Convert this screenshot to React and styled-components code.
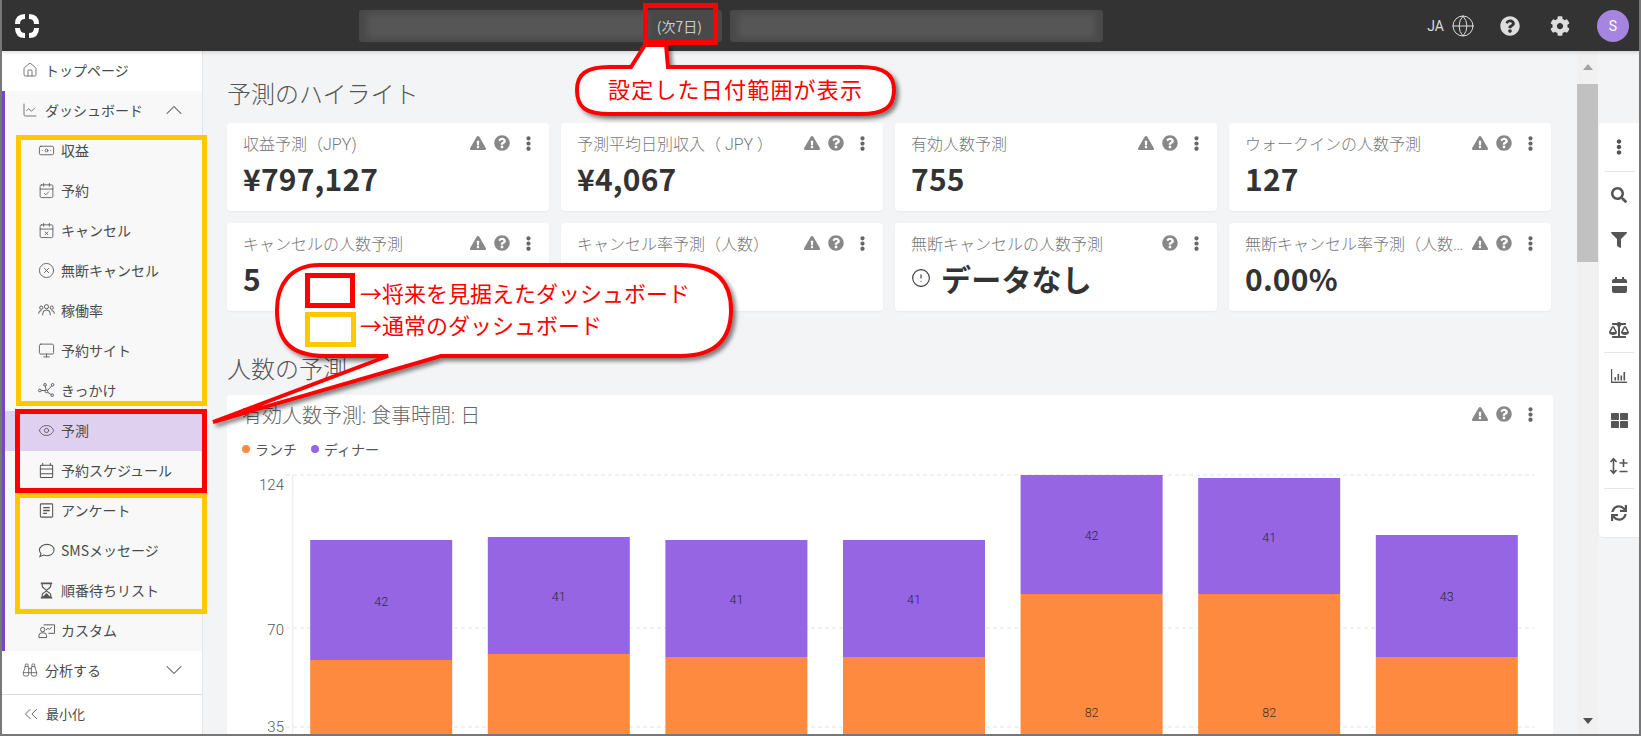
import React from "react";
import styled, { createGlobalStyle } from "styled-components";
import {
  FaExclamationTriangle,
  FaQuestionCircle,
  FaEllipsisV,
  FaCog,
  FaSearch,
  FaFilter,
  FaBalanceScale,
  FaThLarge,
  FaSync,
} from "react-icons/fa";
import {
  Home,
  LineChart,
  Banknote,
  CalendarCheck,
  CalendarX,
  CircleX,
  Monitor,
  Eye,
  Binoculars,
  ChevronsLeft,
  ChevronUp,
  ChevronDown,
  Globe,
  CircleAlert,
} from "lucide-react";

const JP = `"Noto Sans CJK JP", "Noto Sans", sans-serif`;

const GlobalStyle = createGlobalStyle`
  html, body { margin: 0; padding: 0; height: 100%; overflow: hidden; }
  body { font-family: ${JP}; background: #f3f4f6; }
  * { box-sizing: border-box; }
`;

const Frame = styled.div`
  position: relative;
  width: 1641px;
  height: 736px;
  overflow: hidden;
  display: flex;
  flex-direction: column;
  border-left: 2px solid #777;
  border-right: 2px solid #777;
  border-bottom: 2px solid #777;
  background: #f3f4f6;
`;

const TopBar = styled.header`
  flex: 0 0 51px;
  display: flex;
  align-items: center;
  background: #333;
  color: #ddd;
  padding-left: 12px;
  box-shadow: 0 2px 3px rgba(0, 0, 0, 0.12);
  z-index: 2;
`;

const Logo = styled.svg`
  width: 26px;
  height: 26px;
  flex: none;
`;

const DateFields = styled.div`
  margin-left: 319px;
  display: flex;
  gap: 8px;
`;

const DateField = styled.div`
  width: ${(p) => p.$w}px;
  height: 32px;
  border-radius: 3px;
  background: #494949;
  display: flex;
  align-items: center;
  padding-right: ${(p) => p.$pr || 0}px;
  font-size: 14px;
  color: #ccc;
`;

const Blur = styled.div`
  flex: 1;
  height: 24px;
  margin: 0 8px;
  background: #565656;
  filter: blur(3px);
`;

const HeaderTools = styled.div`
  margin-left: auto;
  display: flex;
  align-items: center;
  padding-right: 10px;
`;

const Lang = styled.span`
  font-family: "Roboto", sans-serif;
  font-size: 14px;
  margin-right: 7px;
  color: #ddd;
`;

const HeaderIcon = styled.span`
  display: flex;
  margin-left: ${(p) => p.$ml || 0}px;
  color: #ddd;
`;

const Avatar = styled.div`
  width: 32px;
  height: 32px;
  margin-left: 27px;
  border-radius: 50%;
  background: #a585e0;
  color: #fff;
  font-family: "Roboto", sans-serif;
  font-size: 14px;
  display: flex;
  align-items: center;
  justify-content: center;
`;

const Body = styled.div`
  flex: 1;
  min-height: 0;
  display: flex;
`;

const Sidebar = styled.nav`
  flex: 0 0 201px;
  display: flex;
  flex-direction: column;
  background: #fff;
  border-right: 1px solid #e4e4e4;
`;

const Group = styled.div`
  background: #f8f8f8;
  border-left: 3px solid #7a45c4;
`;

const Row = styled.div`
  height: 40px;
  display: flex;
  align-items: center;
  gap: ${(p) => (p.$sub ? 6 : 7)}px;
  padding-left: ${(p) => (p.$sub ? 33 : p.$inGroup ? 17 : 20)}px;
  padding-right: 14px;
  padding-bottom: 2px;
  font-size: 14px;
  color: #4a4a4a;
  background: ${(p) => (p.$active ? "#dfd0f0" : "transparent")};
  svg {
    flex: none;
    color: #555;
  }
`;

const RowEnd = styled.span`
  margin-left: auto;
  display: flex;
`;

const Collapse = styled(Row)`
  margin-top: 3px;
  flex: 1;
  border-top: 1px solid #ddd;
  padding-left: 18px;
  gap: 4px;
  font-size: 13px;
`;

const Main = styled.main`
  flex: 1;
  min-width: 0;
  padding: 0 24px;
  overflow: hidden;
`;

const SectionTitle = styled.h2`
  margin: 0;
  height: ${(p) => p.$h}px;
  padding-top: ${(p) => p.$pt}px;
  display: flex;
  align-items: center;
  font-size: 24px;
  font-weight: 300;
  color: #555;
`;

const CardGrid = styled.div`
  display: grid;
  grid-template-columns: repeat(4, 322px);
  grid-auto-rows: 88px;
  gap: 12px;
`;

const Card = styled.div`
  background: #fff;
  border-radius: 4px;
  padding: 9px 15px 9px 16px;
  box-shadow: 0 1px 2px rgba(0, 0, 0, 0.05);
`;

const CardHead = styled.div`
  display: flex;
  align-items: center;
  height: 22px;
`;

const CardTitle = styled.div`
  flex: 1;
  min-width: 0;
  font-family: "Roboto", ${JP};
  font-size: 16px;
  font-weight: 300;
  color: #777;
  white-space: nowrap;
  overflow: hidden;
  text-overflow: ellipsis;
`;

const CardIcons = styled.div`
  display: flex;
  align-items: center;
  flex: none;
  gap: 8px;
  margin-right: -2px;
  margin-left: 4px;
  color: #888;
  svg:last-child {
    color: #666;
    margin-left: 3px;
  }
`;

const Value = styled.div`
  margin-top: 6px;
  display: flex;
  align-items: center;
  gap: 10px;
  font-size: 30px;
  line-height: 36px;
  font-weight: 700;
  letter-spacing: 0.2px;
  color: #333;
`;

const ChartCard = styled.section`
  background: #fff;
  border-radius: 4px;
  padding: 8px 17px 8px 15px;
  height: 420px;
`;

const ChartTitle = styled(CardTitle)`
  font-size: 20px;
  color: #666;
`;

const Legend = styled.div`
  display: flex;
  align-items: center;
  gap: 14px;
  margin-top: 14px;
  font-size: 14px;
  line-height: 20px;
  color: #555;
`;

const LegendItem = styled.span`
  display: flex;
  align-items: center;
  gap: 5px;
  &::before {
    content: "";
    width: 8px;
    height: 8px;
    border-radius: 50%;
    background: ${(p) => p.$c};
  }
`;

const ChartSvg = styled.svg`
  display: block;
  margin: 6px 0 0 -15px;
  font-family: "Roboto", sans-serif;
`;

const ScrollBar = styled.div`
  flex: 0 0 21px;
  background: #f1f1f1;
  display: flex;
  flex-direction: column;
  align-items: center;
  justify-content: space-between;
  padding: 13px 0 10px;
`;

const Arrow = styled.span`
  width: 0;
  height: 0;
  border-left: 5px solid transparent;
  border-right: 5px solid transparent;
  ${(p) => (p.$down ? "border-top: 6px solid #505050;" : "border-bottom: 6px solid #a3a3a3;")}
`;

const Thumb = styled.div`
  position: absolute;
  top: 84px;
  right: 41px;
  width: 21px;
  height: 178px;
  background: #c1c1c1;
`;

const ToolRail = styled.div`
  flex: 0 0 40px;
  margin: 72px 0 auto 1px;
  padding: 0 5px;
  background: #fff;
  border-radius: 4px 0 0 4px;
  box-shadow: 0 1px 2px rgba(0, 0, 0, 0.06);
  display: flex;
  flex-direction: column;
  align-items: center;
  color: #555;
`;

const Tool = styled.div`
  height: ${(p) => p.$h || 45}px;
  display: flex;
  align-items: center;
  justify-content: center;
`;

const RailLine = styled.div`
  width: 100%;
  height: 1px;
  background: #e6e6e6;
`;

/* annotations pasted over the screenshot */
const Overlay = styled.div`
  position: absolute;
  inset: 0;
  pointer-events: none;
  z-index: 5;
  svg {
    position: absolute;
    inset: 0;
  }
`;

const MarkBox = styled.div`
  position: absolute;
  left: ${(p) => p.$x}px;
  top: ${(p) => p.$y}px;
  width: ${(p) => p.$w}px;
  height: ${(p) => p.$h}px;
  border: 5px solid ${(p) => p.$c};
`;

const Note = styled.div`
  position: absolute;
  left: ${(p) => p.$x}px;
  top: ${(p) => p.$y}px;
  font-size: 22px;
  line-height: 30px;
  letter-spacing: ${(p) => p.$ls || 0}px;
  color: #f00;
  white-space: nowrap;
`;

const PeopleIcon = ({ size }) => (
  <svg width={size} height={size} viewBox="0 0 18 18" fill="none" stroke="currentColor" strokeWidth="1">
    <circle cx="9" cy="5" r="2.2" />
    <circle cx="3.4" cy="6" r="1.7" />
    <circle cx="14.6" cy="6" r="1.7" />
    <path d="M5 14v-1.5a4 4 0 0 1 8 0V14M.8 12.5v-.8a2.6 2.6 0 0 1 3-2.5M17.2 12.5v-.8a2.6 2.6 0 0 0-3-2.5" />
  </svg>
);

const NodesIcon = ({ size }) => (
  <svg width={size} height={size} viewBox="0 0 18 18" fill="none" stroke="currentColor" strokeWidth="1">
    <circle cx="2" cy="9" r="1.4" />
    <circle cx="7.5" cy="3" r="1.4" />
    <circle cx="15.5" cy="3" r="1.4" />
    <circle cx="9" cy="10" r="1.4" />
    <circle cx="15" cy="14" r="1.4" />
    <path d="M3.4 9h4.2M7.8 4.4l.8 4.2M10.2 10.8l3.6 2.4M14.5 4.2l-4.5 4.8" />
  </svg>
);

const ScheduleIcon = ({ size }) => (
  <svg width={size} height={size} viewBox="0 0 18 18" fill="none" stroke="currentColor" strokeWidth="1.1">
    <path d="M5 1v3M13 1v3" />
    <rect x="2.5" y="3.5" width="13" height="13" rx="1" />
    <path d="M2.5 7.5h13M2.5 12.5h13" />
  </svg>
);

const SurveyIcon = ({ size }) => (
  <svg width={size} height={size} viewBox="0 0 18 18" fill="none" stroke="currentColor" strokeWidth="1.1">
    <rect x="2.5" y="2" width="13" height="14" rx="1" />
    <path d="M5.5 6h7M5.5 9h7M5.5 12h4" strokeWidth="1.4" />
  </svg>
);

const ChatIcon = ({ size }) => (
  <svg width={size} height={size} viewBox="0 0 18 18" fill="none" stroke="currentColor" strokeWidth="1.1">
    <path d="M9.5 2.5c4 0 7.5 2.5 7.5 6s-3.500 6-7.500 6c-1.300 0-2.500-.3-3.500-.7L2 15.500l1.200-3.300C2.200 11.200 1.500 10 1.500 8.500c0-3.500 4-6 8-6z" />
  </svg>
);

const TimerIcon = ({ size }) => (
  <svg width={size} height={size} viewBox="0 0 18 18" fill="none" stroke="currentColor" strokeWidth="1.2">
    <path d="M3 1.500h12M3 16.500h12" strokeWidth="1.800" />
    <path d="M4.500 2v2.500c0 2 4.500 3 4.500 4.500s-4.500 2.500-4.500 4.500V16M13.500 2v2.500c0 2-4.500 3-4.500 4.500s4.500 2.500 4.500 4.500V16" />
    <path d="M6 15.500l3-3 3 3z" fill="currentColor" />
  </svg>
);

const BoardIcon = ({ size }) => (
  <svg width={size} height={size} viewBox="0 0 18 18" fill="none" stroke="currentColor" strokeWidth="1">
    <path d="M6 3h11.500v9H11" />
    <path d="M8.500 8.500l2-2 1.500 1.500 2.500-2.500" />
    <circle cx="5" cy="8" r="2.300" />
    <path d="M1 16.500v-2a3 3 0 0 1 3-3h2a3 3 0 0 1 3 3v2z" />
  </svg>
);

const cards = [
  { title: "収益予測（JPY)", value: "¥797,127" },
  { title: "予測平均日別収入（ JPY ）", value: "¥4,067" },
  { title: "有効人数予測", value: "755" },
  { title: "ウォークインの人数予測", value: "127" },
  { title: "キャンセルの人数予測", value: "5" },
  { title: "キャンセル率予測（人数）", value: "" },
  { title: "無断キャンセルの人数予測", value: "データなし", noWarn: true, empty: true },
  { title: "無断キャンセル率予測（人数）", value: "0.00%" },
];

const subItems = [
  { label: "収益", Icon: Banknote },
  { label: "予約", Icon: CalendarCheck },
  { label: "キャンセル", Icon: CalendarX },
  { label: "無断キャンセル", Icon: CircleX },
  { label: "稼働率", Icon: PeopleIcon },
  { label: "予約サイト", Icon: Monitor },
  { label: "きっかけ", Icon: NodesIcon },
  { label: "予測", Icon: Eye, active: true },
  { label: "予約スケジュール", Icon: ScheduleIcon },
  { label: "アンケート", Icon: SurveyIcon },
  { label: "SMSメッセージ", Icon: ChatIcon },
  { label: "順番待ちリスト", Icon: TimerIcon },
  { label: "カスタム", Icon: BoardIcon },
];

const bars = [
  { purple: 541, orange: 661, top: "42", topY: 602 },
  { purple: 538, orange: 655, top: "41", topY: 597 },
  { purple: 541, orange: 658, top: "41", topY: 600 },
  { purple: 541, orange: 658, top: "41", topY: 600 },
  { purple: 476, orange: 595, top: "42", topY: 536, bottom: "82" },
  { purple: 479, orange: 595, top: "41", topY: 538, bottom: "82" },
  { purple: 536, orange: 658, top: "43", topY: 597 },
];

const CalendarFill = () => (
  <svg width="15" height="16" viewBox="0 0 15 16" fill="#555">
    <rect x="3" y="0" width="2" height="3" />
    <rect x="10" y="0" width="2" height="3" />
    <path d="M0 4a2 2 0 0 1 2-2h11a2 2 0 0 1 2 2v2H0zM0 9h15v5a2 2 0 0 1-2 2H2a2 2 0 0 1-2-2z" />
  </svg>
);

const ChartIcon = () => (
  <svg width="16" height="14" viewBox="0 0 16 14" fill="#555">
    <rect x="0" y="0" width="1.2" height="14" />
    <rect x="0" y="12.6" width="16" height="1.4" />
    <rect x="3.5" y="8" width="1.6" height="3.5" />
    <rect x="6.5" y="5" width="1.6" height="6.5" />
    <rect x="9.5" y="6.5" width="1.6" height="5" />
    <rect x="12.5" y="3" width="1.6" height="8.5" />
  </svg>
);

const SortPlusMinus = () => (
  <svg width="20" height="18" viewBox="0 0 20 18" fill="none" stroke="#555" strokeWidth="1.6">
    <path d="M4.5 2v14M1.5 5l3-3.4 3 3.4M1.5 13l3 3.4 3-3.4" />
    <path d="M14.5 2v8M10.5 6h8M10.5 14.5h8" />
  </svg>
);

function App() {
  return (
    <>
      <GlobalStyle />
      <Frame>
        <TopBar>
          <Logo viewBox="0 0 26 26" fill="none" stroke="#fff" strokeWidth="5">
            <path d="M3.500 11Q3.500 3.500 11 3.500M15 3.500Q22.500 3.500 22.500 11M3.500 15Q3.500 22.500 11 22.500M15 22.500Q22.500 22.500 22.500 15" />
          </Logo>
          <DateFields>
            <DateField $w={363} $pr={20}>
              <Blur />
              (次7日)
            </DateField>
            <DateField $w={373}>
              <Blur />
            </DateField>
          </DateFields>
          <HeaderTools>
            <Lang>JA</Lang>
            <HeaderIcon>
              <Globe size={24} strokeWidth={1} />
            </HeaderIcon>
            <HeaderIcon $ml={25}>
              <FaQuestionCircle size={20} />
            </HeaderIcon>
            <HeaderIcon $ml={30}>
              <FaCog size={20} />
            </HeaderIcon>
            <Avatar>S</Avatar>
          </HeaderTools>
        </TopBar>

        <Body>
          <Sidebar>
            <Row>
              <Home size={16} strokeWidth={1.2} />
              トップページ
            </Row>
            <Group>
              <Row $inGroup>
                <LineChart size={16} strokeWidth={1.2} />
                ダッシュボード
                <RowEnd>
                  <ChevronUp size={28} strokeWidth={0.9} />
                </RowEnd>
              </Row>
              {subItems.map(({ label, Icon, active }) => (
                <Row $sub $active={active} key={label}>
                  <Icon size={17} strokeWidth={1.2} />
                  {label}
                </Row>
              ))}
            </Group>
            <Row>
              <Binoculars size={16} strokeWidth={1.2} />
              分析する
              <RowEnd>
                <ChevronDown size={28} strokeWidth={0.9} />
              </RowEnd>
            </Row>
            <Collapse>
              <ChevronsLeft size={22} strokeWidth={1} />
              最小化
            </Collapse>
          </Sidebar>

          <Main>
            <SectionTitle $h={72} $pt={10}>予測のハイライト</SectionTitle>
            <CardGrid>
              {cards.map((c) => (
                <Card key={c.title}>
                  <CardHead>
                    <CardTitle>{c.title}</CardTitle>
                    <CardIcons>
                      {!c.noWarn && <FaExclamationTriangle size={16} />}
                      <FaQuestionCircle size={16} />
                      <FaEllipsisV size={15} />
                    </CardIcons>
                  </CardHead>
                  <Value>
                    {c.empty && <CircleAlert size={20} strokeWidth={1.3} />}
                    {c.value}
                  </Value>
                </Card>
              ))}
            </CardGrid>
            <SectionTitle $h={84} $pt={28}>人数の予測</SectionTitle>
            <ChartCard>
              <CardHead>
                <ChartTitle>有効人数予測: 食事時間: 日</ChartTitle>
                <CardIcons>
                  <FaExclamationTriangle size={16} />
                  <FaQuestionCircle size={16} />
                  <FaEllipsisV size={15} />
                </CardIcons>
              </CardHead>
              <Legend>
                <LegendItem $c="#fd8a3e">ランチ</LegendItem>
                <LegendItem $c="#9565e3">ディナー</LegendItem>
              </Legend>
              <ChartSvg width="1322" height="290" viewBox="227 466 1322 290">
                <line x1="292.5" y1="476" x2="292.5" y2="740" stroke="#eee" strokeWidth="1.5" />
                {[476, 629, 728].map((y) => (
                  <line key={y} x1="286" y1={y} x2="1534" y2={y} stroke="#e2e2e2" strokeDasharray="4 3" />
                ))}
                {[
                  ["124", 491],
                  ["70", 636],
                  ["35", 733],
                ].map(([t, y]) => (
                  <text key={t} x="284" y={y} textAnchor="end" fontSize="15" fontWeight="300" fill="#555">
                    {t}
                  </text>
                ))}
                {bars.map((b, i) => {
                  const x = 310.7 + i * 177.6;
                  return (
                    <g key={i}>
                      <rect x={x - 0.5} y={b.purple} width="142" height={b.orange - b.purple} fill="#9565e3" />
                      <rect x={x - 0.5} y={b.orange} width="142" height={756 - b.orange} fill="#fd8a3e" />
                      <text x={x + 70.5} y={b.topY + 4.5} textAnchor="middle" fontSize="12.5" fontWeight="300" fill="#2e2440">
                        {b.top}
                      </text>
                      {b.bottom && (
                        <text x={x + 70.5} y="717.5" textAnchor="middle" fontSize="12.5" fontWeight="300" fill="#4a2e18">
                          {b.bottom}
                        </text>
                      )}
                    </g>
                  );
                })}
              </ChartSvg>
            </ChartCard>
          </Main>

          <ScrollBar>
            <Arrow />
            <Arrow $down />
          </ScrollBar>
          <Thumb />

          <ToolRail>
            <Tool $h={48}>
              <FaEllipsisV size={16} />
            </Tool>
            <RailLine />
            <Tool>
              <FaSearch size={16} />
            </Tool>
            <Tool>
              <FaFilter size={16} />
            </Tool>
            <Tool>
              <CalendarFill />
            </Tool>
            <Tool>
              <FaBalanceScale size={20} />
            </Tool>
            <RailLine />
            <Tool>
              <ChartIcon />
            </Tool>
            <Tool>
              <FaThLarge size={17} />
            </Tool>
            <Tool>
              <SortPlusMinus />
            </Tool>
            <RailLine />
            <Tool $h={48}>
              <FaSync size={16} />
            </Tool>
          </ToolRail>
        </Body>

        <Overlay>
          <svg width="1641" height="736" viewBox="2 0 1641 736">
            <defs>
              <filter id="drop" x="-10%" y="-10%" width="125%" height="130%">
                <feDropShadow dx="3" dy="3" stdDeviation="2" floodColor="#000" floodOpacity="0.5" />
              </filter>
            </defs>
            <path
              d="M645 45 L631 67 H610 C585 67 577 75 577 90 C577 107 585 114 610 114 H860 C885 114 894 107 894 90 C894 75 885 67 860 67 H668 L666 45 Z"
              fill="#fff"
              stroke="#f00"
              strokeWidth="4"
              filter="url(#drop)"
            />
            <path
              d="M320 265 H680 C720 265 731 285 731 310 C731 340 715 356 680 356 H441 L213 422 L388 356 H325 C290 356 277 340 277 310 C277 285 290 265 320 265 Z"
              fill="#fff"
              stroke="#f00"
              strokeWidth="4"
              filter="url(#drop)"
            />
          </svg>
          <MarkBox $x={641} $y={3} $w={75} $h={42} $c="#f00" />
          <MarkBox $x={14} $y={135} $w={191} $h={271} $c="#ffc800" />
          <MarkBox $x={13} $y={409} $w={192} $h={84} $c="#f00" />
          <MarkBox $x={13} $y={493} $w={192} $h={121} $c="#ffc800" />
          <MarkBox $x={303} $y={273} $w={50} $h={35} $c="#f00" />
          <MarkBox $x={303} $y={312} $w={51} $h={35} $c="#ffc800" />
          <Note $x={606} $y={73} $ls={1.2}>設定した日付範囲が表示</Note>
          <Note $x={358} $y={277}>→将来を見据えたダッシュボード</Note>
          <Note $x={358} $y={309}>→通常のダッシュボード</Note>
        </Overlay>
      </Frame>
    </>
  );
}

export default App;
